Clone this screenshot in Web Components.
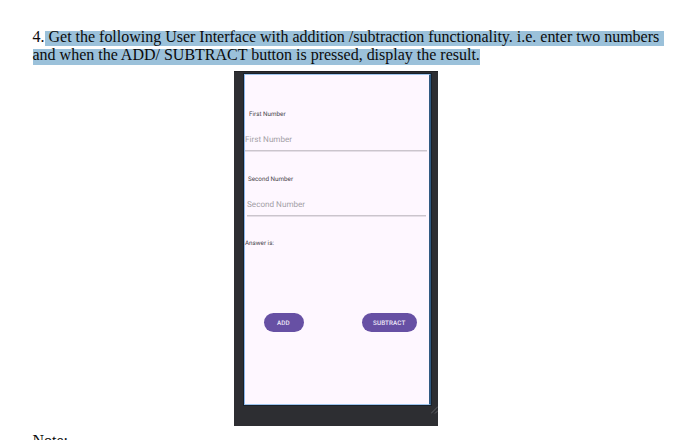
<!DOCTYPE html>
<html lang="en">
<head>
<meta charset="utf-8">
<title>Addition and subtraction exercise</title>
<style>
html, body { margin: 0; height: 440px; overflow: hidden; background: #fff; }
</style>
</head>
<body>
<exercise-page></exercise-page>
<script>
function define(name, html) {
  const template = document.createElement('template');
  template.innerHTML = html;
  customElements.define(name, class extends HTMLElement {
    constructor() {
      super();
      this.attachShadow({ mode: 'open' }).append(template.content.cloneNode(true));
    }
  });
}

// One line of the task text; the slotted text is highlighted.
define('task-line', `
<style>
:host { display: flex; height: 18px; white-space: pre; font: 16px/18px "Liberation Serif", serif; color: #0b0b0b; }
.mark { display: block; background: #9bc1da; height: var(--mark-height, 15px); width: var(--mark-width); line-height: 12px; letter-spacing: var(--track, 0); }
.lead { line-height: 12px; margin-left: -.5px; }
</style>
<span class="lead"><slot name="lead"></slot></span><span class="mark"><slot></slot></span>`);

define('field-label', `
<style>
:host { display: block; height: 10px; font: 6.3px/10px Roboto, sans-serif; color: #49454c; white-space: nowrap; }
span { display: block; transform: translateY(.1px) rotate(.02deg); transform-origin: 0 0; }
</style><span><slot></slot></span>`);

define('number-field', `
<style>
:host { display: block; box-sizing: border-box; height: 18px; border-bottom: 1px solid #cbc5cd; box-shadow: 0 1px #e5dee7; font: 8.15px/13px Roboto, sans-serif; color: #a39fa6; white-space: nowrap; }
span { display: block; transform: translateY(-.1px) rotate(.02deg); transform-origin: 0 0; }
</style><span><slot></slot></span>`);

define('pill-button', `
<style>
:host { display: flex; align-items: center; justify-content: center; height: 18.5px; border-radius: 10px; background: #6750a4; color: #eee8f8; font: 500 6.3px/18px Roboto, sans-serif; letter-spacing: .1px; }
span { transform: translateY(.6px) rotate(.02deg); }
</style><span><slot></slot></span>`);

define('phone-screen', `
<style>
:host { display: block; box-sizing: border-box; width: 187px; height: 331px; background: #fef7ff; border: 1px solid #9fc5ee; border-left-color: #8bb8ed; border-right: 2px solid #315b83; box-shadow: 0 0 0 1px #18212b; text-rendering: geometricPrecision; }
field-label.first { margin: 34px 0 0 4px; }
number-field.first { margin: 14px 2px 0 0; }
field-label.second { margin: 23px 0 0 3.3px; }
number-field.second { margin: 14px 3px 0 2px; }
field-label.answer { margin: 22px 0 0 .3px; }
.actions { display: flex; justify-content: space-between; margin: 65px 12.5px 0 18.5px; }
.add { width: 40px; }
.subtract { width: 54.5px; }
</style>
<field-label class="first">First Number</field-label>
<number-field class="first">First Number</number-field>
<field-label class="second">Second Number</field-label>
<number-field class="second">Second Number</number-field>
<field-label class="answer">Answer is:</field-label>
<div class="actions"><pill-button class="add">ADD</pill-button><pill-button class="subtract">SUBTRACT</pill-button></div>`);

// Emulator frame with its resize grip in the lower right corner.
define('emulator-frame', `
<style>
:host { display: block; position: relative; box-sizing: border-box; width: 204px; height: 355px; padding: 3px 0 0 10px; background: #2d2e32; box-shadow: inset 0 1px #202124; }
svg { position: absolute; right: 0; bottom: 12px; width: 7px; height: 8px; }
</style>
<slot></slot>
<svg viewBox="0 0 7 8"><path d="M0 7.5 7 .5M4 7.5 7 4.5" stroke="#66676b" stroke-width=".9" fill="none"/></svg>`);

define('exercise-page', `
<style>
:host { display: block; box-sizing: border-box; height: 440px; padding: 31px 0 0 33px; overflow: hidden; }
.one { --mark-width: 619px; --track: -.01px; }
.two { --mark-width: 447px; --mark-height: 16px; --track: -.005px; }
emulator-frame { margin: 4px 0 0 201px; }
.note { height: 18px; margin: 6px 0 0 -.5px; font: 16px/18px "Liberation Serif", serif; color: #0b0b0b; }
</style>
<task-line class="one"><span slot="lead">4.</span> Get the following User Interface with addition /subtraction functionality. i.e. enter two numbers</task-line>
<task-line class="two">and when the ADD/ SUBTRACT button is pressed, display the result.</task-line>
<emulator-frame><phone-screen></phone-screen></emulator-frame>
<div class="note">Note:</div>`);
</script>
</body>
</html>
